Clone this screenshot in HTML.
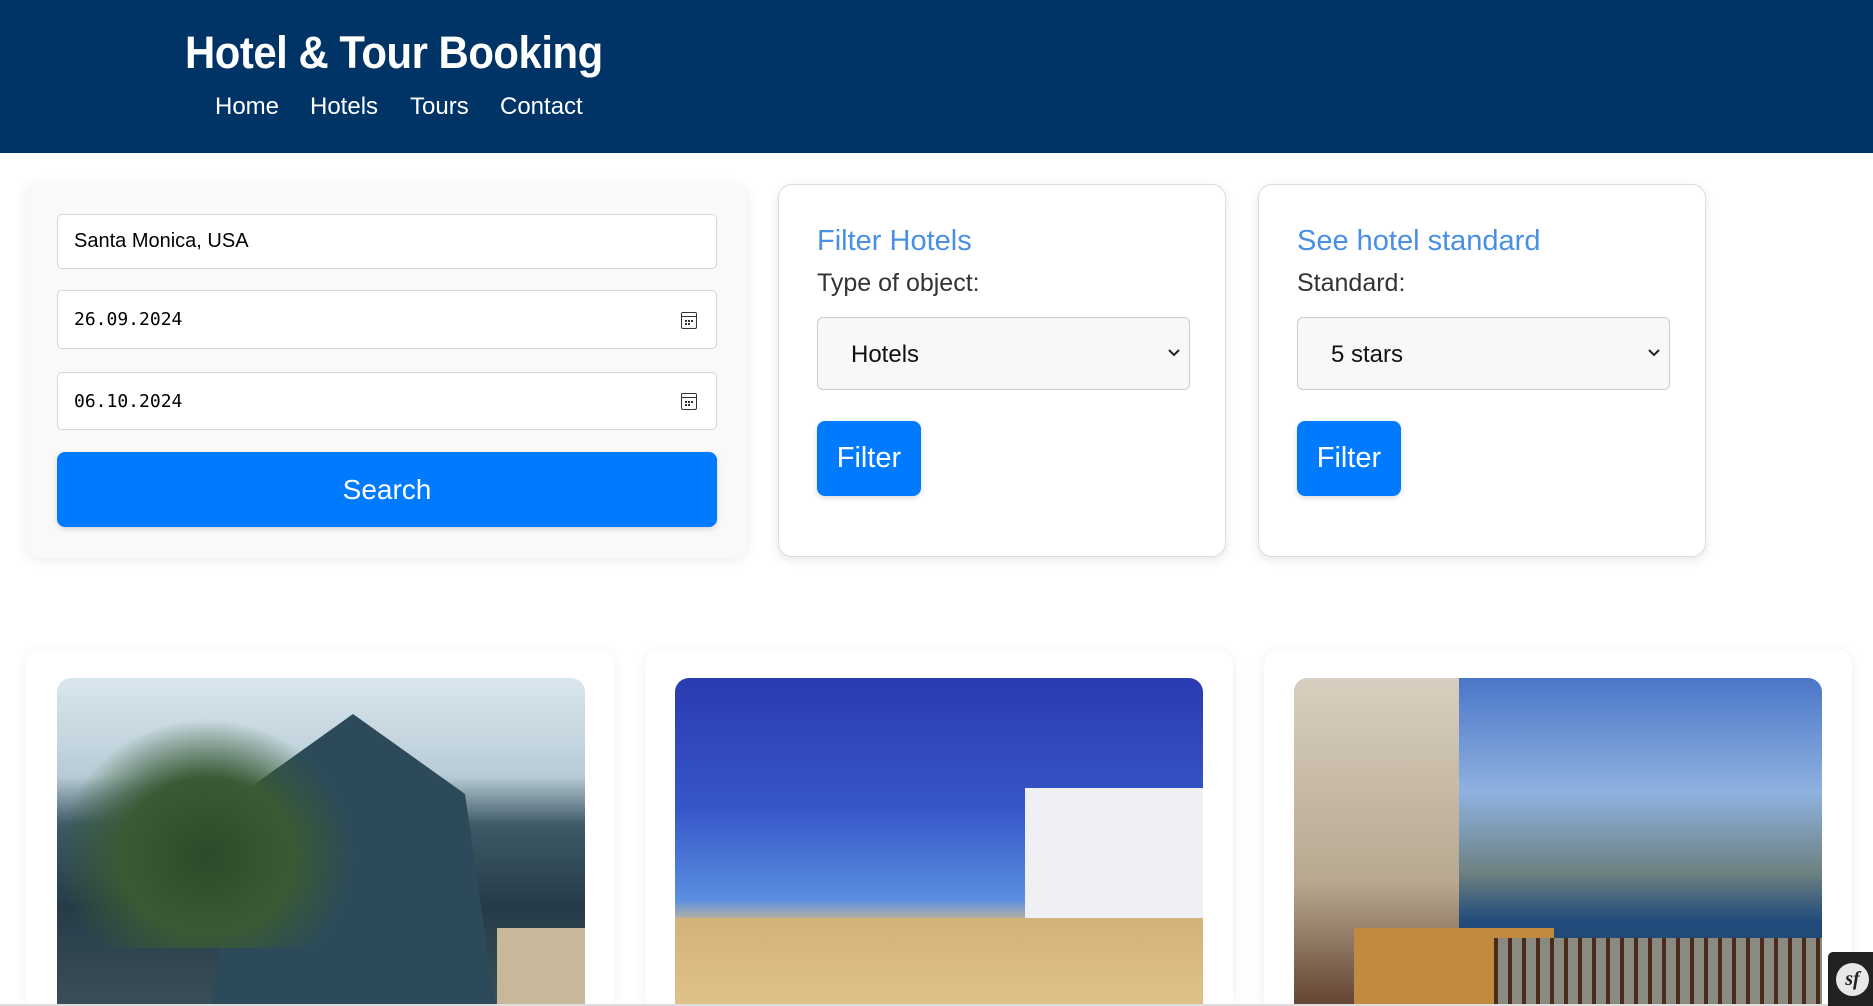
<!DOCTYPE html>
<html><head><meta charset="utf-8"><style>
*{box-sizing:border-box;margin:0;padding:0}
html,body{width:1873px;height:1006px;overflow:hidden}
body{background:#fff;font-family:"Liberation Sans",Arial,sans-serif;position:relative}
.hdr{position:absolute;left:0;top:0;width:1873px;height:153px;background:#003366;color:#fff}
.hdr h1{position:absolute;left:185px;top:27px;font-size:45px;font-weight:bold;letter-spacing:-0.5px;transform:scaleX(0.93);transform-origin:left;white-space:nowrap}
.nav a{position:absolute;top:93px;font-size:24px;color:#fff;text-decoration:none}
.card1{position:absolute;left:26px;top:183px;width:721px;height:375px;background:#f9f9f9;border-radius:14px;box-shadow:0 2px 12px rgba(0,0,0,.08)}
.inp{position:absolute;left:57px;width:660px;background:#fff;border:1px solid #d6d6d6;border-radius:5px}
.inp span{position:absolute;left:16px}
.mono{font-family:"DejaVu Sans Mono","Liberation Mono",monospace;font-size:18px}
.cal{position:absolute;right:19px;width:16px;height:17px;border:1.6px solid #333;border-radius:2px}
.cal:before{content:"";position:absolute;left:0;right:0;top:3px;border-top:1.5px solid #333}
.cal:after{content:"";position:absolute;left:3px;top:7px;width:2px;height:2px;background:#333;box-shadow:3px 0 #333,6px 0 #333,0 3px #333,3px 3px #333}
.btn{position:absolute;background:#007bff;color:#fff;border-radius:8px;text-align:center;box-shadow:0 2px 6px rgba(0,0,0,.15)}
.fc{position:absolute;top:184px;width:448px;height:373px;background:#fff;border:1px solid #ddd;border-radius:14px;box-shadow:0 3px 10px rgba(0,0,0,.1)}
.fc h3{position:absolute;left:38px;top:40px;font-size:29px;font-weight:normal;color:#4a90e2}
.fc p{position:absolute;left:38px;top:84px;font-size:25px;color:#333}
.sel{position:absolute;left:38px;top:132px;width:373px;height:73px;background:#f8f8f8;border:1px solid #ccc;border-radius:6px;font-size:24px;color:#111}
.sel span{position:absolute;left:33px;top:23px}
.sel svg{position:absolute;right:8px;top:30px}
.fc .btn{left:38px;top:236px;width:104px;height:75px;font-size:29px;line-height:75px}
.pc{position:absolute;top:649px;width:588px;height:355px;background:#fff;border-radius:16px 16px 0 0;box-shadow:0 2px 12px rgba(0,0,0,.07)}
.img{position:absolute;top:678px;width:528px;height:326px;border-radius:14px 14px 0 0;overflow:hidden}
</style></head><body>
<div class="hdr"><h1>Hotel &amp; Tour Booking</h1>
<div class="nav"><a style="left:215px">Home</a><a style="left:310px">Hotels</a><a style="left:410px">Tours</a><a style="left:500px">Contact</a></div></div>

<div class="card1"></div>
<div class="inp" style="top:214px;height:55px;font-size:20px"><span style="top:15px">Santa Monica, USA</span></div>
<div class="inp mono" style="top:290px;height:59px"><span style="top:18px">26.09.2024</span><div class="cal" style="top:21px"></div></div>
<div class="inp mono" style="top:372px;height:58px"><span style="top:18px">06.10.2024</span><div class="cal" style="top:20px"></div></div>
<div class="btn" style="left:57px;top:452px;width:660px;height:75px;font-size:28px;line-height:75px">Search</div>

<div class="fc" style="left:778px"><h3>Filter Hotels</h3><p>Type of object:</p>
<div class="sel"><span>Hotels</span><svg width="14" height="10" viewBox="0 0 14 10"><path d="M2 2l5 5 5-5" stroke="#222" stroke-width="2" fill="none"/></svg></div>
<div class="btn">Filter</div></div>
<div class="fc" style="left:1258px"><h3>See hotel standard</h3><p>Standard:</p>
<div class="sel"><span>5 stars</span><svg width="14" height="10" viewBox="0 0 14 10"><path d="M2 2l5 5 5-5" stroke="#222" stroke-width="2" fill="none"/></svg></div>
<div class="btn">Filter</div></div>

<div class="pc" style="left:26px"></div>
<div class="pc" style="left:645px"></div>
<div class="pc" style="left:1264px"></div>
<div class="img" style="left:57px;background:linear-gradient(180deg,#d9e6ee 0%,#b8ccd6 30%,#3e5a66 45%,#253c48 70%,#3a4e58 100%)">
<div style="position:absolute;left:120px;top:20px;width:320px;height:320px;background:#2c4a5a;clip-path:polygon(20% 30%,55% 5%,90% 30%,100% 100%,10% 100%)"></div>
<div style="position:absolute;left:0;top:40px;width:300px;height:230px;background:radial-gradient(ellipse at 50% 60%,#2d4a2a 0%,#3a5a34 40%,transparent 70%)"></div>
<div style="position:absolute;left:440px;top:250px;width:90px;height:90px;background:#c8b89a"></div></div>
<div class="img" style="left:675px;background:linear-gradient(180deg,#2a3bb0 0%,#3656c8 40%,#5a8fe0 68%,#c8b898 75%,#d9bf8a 100%)">
<div style="position:absolute;left:350px;top:110px;width:180px;height:140px;background:#eef0f4"></div>
<div style="position:absolute;left:0;top:240px;width:528px;height:100px;background:linear-gradient(180deg,#d4b27a,#e0c48c)"></div></div>
<div class="img" style="left:1294px;background:linear-gradient(180deg,#4a76c8 0%,#8fb2e0 35%,#6c8080 60%,#1f4a7a 75%,#2a4e6a 100%)">
<div style="position:absolute;left:0;top:0;width:165px;height:340px;background:linear-gradient(180deg,#d8cfc0,#b8a890 60%,#5a3a28)"></div>
<div style="position:absolute;left:60px;top:250px;width:200px;height:90px;background:#c08a40"></div>
<div style="position:absolute;left:200px;top:260px;width:328px;height:80px;background:repeating-linear-gradient(90deg,#4a2a1a 0 4px,#8a8a80 4px 14px)"></div></div>
<div style="position:absolute;left:0;top:1004px;width:1873px;height:2px;background:#ddd"></div>
<div style="position:absolute;left:1828px;top:952px;width:45px;height:54px;background:#222;border-radius:5px 0 0 0">
<div style="position:absolute;left:8px;top:11px;width:33px;height:33px;border-radius:50%;background:#e8e8e8;color:#222;font:italic bold 20px 'Liberation Serif',serif;text-align:center;line-height:32px">sf</div></div>
</body></html>
